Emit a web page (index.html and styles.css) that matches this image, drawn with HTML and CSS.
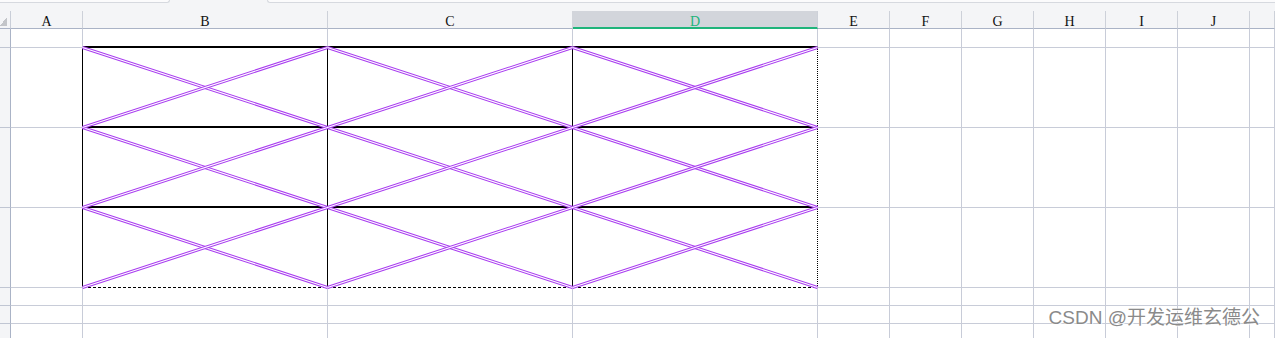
FILE: index.html
```html
<!DOCTYPE html>
<html lang="zh-CN">
<head>
	<meta charset="UTF-8">
	<title>Sheet</title>
	<link rel="stylesheet" href="styles.css">
</head>
<body>
	<div class="topbar">
		<div class="tab tab-l"></div>
		<div class="tab tab-r"></div>
	</div>
	<div class="sheet">
		<!-- column headers -->
		<div class="corner"><i></i></div>
		<div class="ch">A</div>
		<div class="ch">B</div>
		<div class="ch pre">C</div>
		<div class="ch sel">D</div>
		<div class="ch">E</div>
		<div class="ch">F</div>
		<div class="ch">G</div>
		<div class="ch">H</div>
		<div class="ch">I</div>
		<div class="ch">J</div>
		<div class="ch"></div>
		<!-- row 1 -->
		<div class="rh"></div>
		<div class="c"></div>
		<div class="c hb"></div>
		<div class="c hb"></div>
		<div class="c hb"></div>
		<div class="c"></div><div class="c"></div><div class="c"></div><div class="c"></div><div class="c"></div><div class="c"></div><div class="c"></div>
		<!-- row 2 -->
		<div class="rh"></div>
		<div class="c vb"></div>
		<div class="c vb hb"></div>
		<div class="c vb hb"></div>
		<div class="c vd hb"></div>
		<div class="c"></div><div class="c"></div><div class="c"></div><div class="c"></div><div class="c"></div><div class="c"></div><div class="c"></div>
		<!-- row 3 -->
		<div class="rh"></div>
		<div class="c vb"></div>
		<div class="c vb hb"></div>
		<div class="c vb hb"></div>
		<div class="c vd hb"></div>
		<div class="c"></div><div class="c"></div><div class="c"></div><div class="c"></div><div class="c"></div><div class="c"></div><div class="c"></div>
		<!-- row 4 -->
		<div class="rh"></div>
		<div class="c vb"></div>
		<div class="c vb hd"></div>
		<div class="c vb hd"></div>
		<div class="c vd hd"></div>
		<div class="c"></div><div class="c"></div><div class="c"></div><div class="c"></div><div class="c"></div><div class="c"></div><div class="c"></div>
		<!-- rows 5-7 -->
		<div class="rh"></div>
		<div class="c"></div><div class="c"></div><div class="c"></div><div class="c"></div><div class="c"></div><div class="c"></div><div class="c"></div><div class="c"></div><div class="c"></div><div class="c"></div><div class="c"></div>
		<div class="rh"></div>
		<div class="c"></div><div class="c"></div><div class="c"></div><div class="c"></div><div class="c"></div><div class="c"></div><div class="c"></div><div class="c"></div><div class="c"></div><div class="c"></div><div class="c"></div>
		<div class="rh"></div>
		<div class="c"></div><div class="c"></div><div class="c"></div><div class="c"></div><div class="c"></div><div class="c"></div><div class="c"></div><div class="c"></div><div class="c"></div><div class="c"></div><div class="c"></div>

		<!-- diagonal double lines over B2:D4 -->
		<svg class="xs" viewBox="0 0 736 241" xmlns="http://www.w3.org/2000/svg">
			<g fill="none" stroke-linecap="butt">
				<path class="dl" d="M0.5 0.5L245.5 80.5M245.5 0.5L490.5 80.5M490.5 0.5L735.5 80.5M0.5 80.5L245.5 160.5M245.5 80.5L490.5 160.5M490.5 80.5L735.5 160.5M0.5 160.5L245.5 240.5M245.5 160.5L490.5 240.5M490.5 160.5L735.5 240.5"/>
				<path class="dl-in" d="M0.5 0.5L245.5 80.5M245.5 0.5L490.5 80.5M490.5 0.5L735.5 80.5M0.5 80.5L245.5 160.5M245.5 80.5L490.5 160.5M490.5 80.5L735.5 160.5M0.5 160.5L245.5 240.5M245.5 160.5L490.5 240.5M490.5 160.5L735.5 240.5"/>
				<path class="dl" d="M0.5 80.5L245.5 0.5M245.5 80.5L490.5 0.5M490.5 80.5L735.5 0.5M0.5 160.5L245.5 80.5M245.5 160.5L490.5 80.5M490.5 160.5L735.5 80.5M0.5 240.5L245.5 160.5M245.5 240.5L490.5 160.5M490.5 240.5L735.5 160.5"/>
				<path class="dl-in" d="M0.5 80.5L245.5 0.5M245.5 80.5L490.5 0.5M490.5 80.5L735.5 0.5M0.5 160.5L245.5 80.5M245.5 160.5L490.5 80.5M490.5 160.5L735.5 80.5M0.5 240.5L245.5 160.5M245.5 240.5L490.5 160.5M490.5 240.5L735.5 160.5"/>
			</g>
		</svg>
	</div>
	<div class="mark">CSDN @开发运维玄德公</div>
</body>
</html>
```
FILE: styles.css
```css
html,body{
	margin:0;
	background:#fff;
}
body{
	position:relative;
	width:1275px;
	height:338px;
	overflow:hidden;
	font-family:"Liberation Sans","Noto Sans CJK SC",sans-serif;
}
.topbar{
	height:11px;
	background:#f4f5f7;
	display:flex;
	align-items:flex-start;
}
.tab{
	height:2px;
	background:#fbfbfc;
	border-bottom:1px solid #d6d9df;
}
.tab-l{
	width:169px;
	border-right:1px solid #d6d9df;
	border-bottom-right-radius:3px;
}
.tab-r{
	flex:1;
	margin-left:97px;
	border-left:1px solid #d6d9df;
	border-bottom-left-radius:3px;
}

.sheet{
	position:relative;
	display:grid;
	grid-template-columns:11px 72px 245px 245px 245px 72px 72px 72px 72px 72px 72px 1fr;
	grid-template-rows:18px 19px 80px 80px 80px 18px 18px 18px;
}
.sheet > div{
	box-sizing:border-box;
}
.corner{
	background:#f4f5f7;
	border-right:1px solid #c9ced8;
	border-bottom:1px solid #aab3c6;
	display:flex;
	align-items:flex-end;
	padding-bottom:2px;
}
.corner i{
	width:7px;
	height:9px;
	background:linear-gradient(to top left,#c3c5c9 50%,transparent 50%);
}
.ch{
	background:#f4f5f7;
	border-right:1px solid #cdd1d9;
	border-bottom:1px solid #aab3c6;
	text-align:center;
	font:14px/21px "Liberation Serif",serif;
	color:#111;
}
.ch.pre{
	border-right-color:#d2d5db;
}
.ch.sel{
	background:#d2d5db;
	border-bottom:2px solid #1fb47b;
	color:#1fb47b;
}
.rh{
	background:#f4f5f7;
	border-right:1px solid #aab3c6;
	border-bottom:1px solid #c0c6d3;
}
.c{
	border-right:1px solid #c8ccd8;
	border-bottom:1px solid #c8ccd8;
}
.c.hb{
	border-bottom:2px solid #000;
}
.c.vb{
	border-right-color:#000;
}
.c.vd{
	border-right:1px dotted #000;
}
.c.hd{
	border-bottom-color:transparent;
	background:linear-gradient(to right,#000 3px,transparent 3px) left bottom / 5px 1px repeat-x;
	background-origin:border-box;
}

.xs{
	position:absolute;
	left:82px;
	top:36px;
	width:736px;
	height:241px;
	overflow:visible;
}
.xs .dl{
	stroke:#a93cf0;
	stroke-width:3.2;
}
.xs .dl-in{
	stroke:#fff;
	stroke-width:1.1;
}

.mark{
	position:absolute;
	right:15px;
	top:305px;
	font-size:19px;
	line-height:26px;
	color:#8a8a8a;
	text-shadow:0 0 1px #fff,1px 1px 1px #fff;
	white-space:nowrap;
}
```
